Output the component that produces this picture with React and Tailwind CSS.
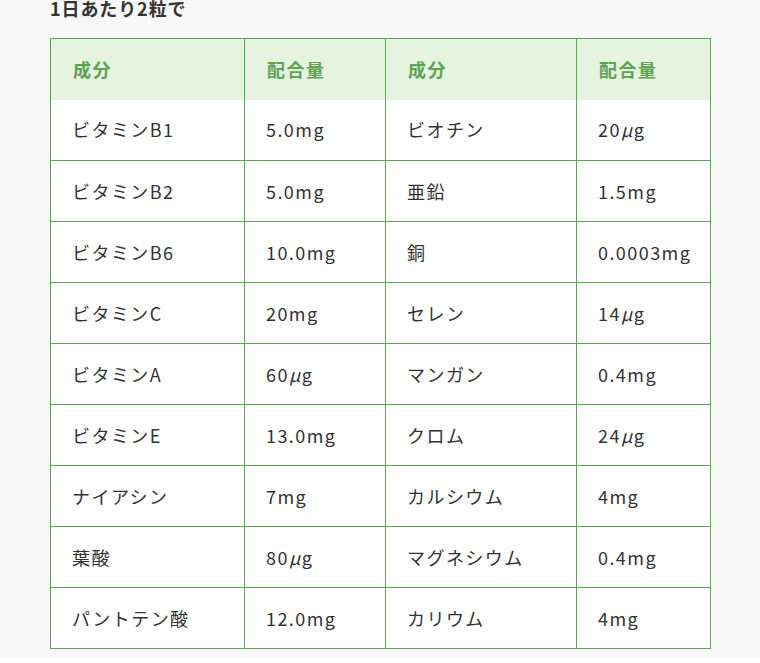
import React from "react";

const rows = [
  ["ビタミンB1", "5.0mg", "ビオチン", "20μg"],
  ["ビタミンB2", "5.0mg", "亜鉛", "1.5mg"],
  ["ビタミンB6", "10.0mg", "銅", "0.0003mg"],
  ["ビタミンC", "20mg", "セレン", "14μg"],
  ["ビタミンA", "60μg", "マンガン", "0.4mg"],
  ["ビタミンE", "13.0mg", "クロム", "24μg"],
  ["ナイアシン", "7mg", "カルシウム", "4mg"],
  ["葉酸", "80μg", "マグネシウム", "0.4mg"],
  ["パントテン酸", "12.0mg", "カリウム", "4mg"],
];

const font = {
  fontFamily: '"Noto Sans CJK JP", "Noto Sans", sans-serif',
};

function Unit({ text }) {
  const parts = text.split("μ");
  if (parts.length === 1) return text;
  return (
    <>
      {parts[0]}
      <span className="italic">μ</span>
      {parts[1]}
    </>
  );
}

export default function App() {
  return (
    <div className="min-h-[663px] bg-[#f8f8f8] px-[50px] text-[#333]" style={font}>
      <h2 className="-mt-[5px] h-[43px] text-[18px] leading-[26px] font-bold tracking-[0.05em]">
        1日あたり2粒で
      </h2>
      <table className="w-[660px] table-fixed border-collapse border border-[#5ba650] bg-white text-[18px] tracking-[0.08em]">
        <colgroup>
          <col className="w-[194px]" />
          <col className="w-[141px]" />
          <col className="w-[191px]" />
          <col className="w-[134px]" />
        </colgroup>
        <thead>
          <tr className="h-[61px] bg-[#e5f3e0] text-[#5ea352]">
            {["成分", "配合量", "成分", "配合量"].map((h, i) => (
              <th
                key={i}
                className="border-x border-[#5ba650] px-[22px] text-left font-bold"
              >
                {h}
              </th>
            ))}
          </tr>
        </thead>
        <tbody>
          {rows.map((r, i) => (
            <tr key={i} className="h-[61px]">
              {r.map((c, j) => (
                <td
                  key={j}
                  className={`border border-[#5ba650] px-[21px] align-middle ${
                    i === 0 ? "border-t-0" : ""
                  }`}
                >
                  <Unit text={c} />
                </td>
              ))}
            </tr>
          ))}
        </tbody>
      </table>
    </div>
  );
}
